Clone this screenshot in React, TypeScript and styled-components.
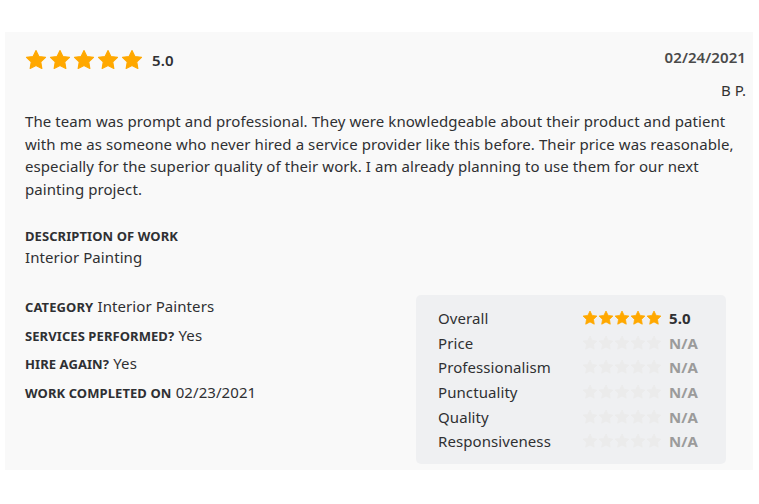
import React from 'react'
import styled, { createGlobalStyle } from 'styled-components'

type Rating = {
  label: string
  value: number | null
}

const ratings: Rating[] = [
  { label: 'Overall', value: 5 },
  { label: 'Price', value: null },
  { label: 'Professionalism', value: null },
  { label: 'Punctuality', value: null },
  { label: 'Quality', value: null },
  { label: 'Responsiveness', value: null },
]

const details = [
  { label: 'CATEGORY', value: 'Interior Painters' },
  { label: 'SERVICES PERFORMED?', value: 'Yes' },
  { label: 'HIRE AGAIN?', value: 'Yes' },
  { label: 'WORK COMPLETED ON', value: '02/23/2021' },
]

const STAR_POINTS = '12,1.6 15.2,8.1 22.4,9.1 17.2,14.1 18.4,21.3 12,17.9 5.6,21.3 6.8,14.1 1.6,9.1 8.8,8.1'

const Star: React.FC<{ size: number; filled: boolean }> = ({ size, filled }) => (
  <svg width={size} height={size} viewBox="0 0 24 24">
    <polygon
      points={STAR_POINTS}
      fill={filled ? '#ffa800' : '#ebebeb'}
      stroke={filled ? '#ffa800' : '#ebebeb'}
      strokeWidth="1.2"
      strokeLinejoin="round"
    />
  </svg>
)

const Stars: React.FC<{ count: number; size: number; gap: number }> = ({ count, size, gap }) => (
  <StarRow $gap={gap}>
    {[0, 1, 2, 3, 4].map((i) => (
      <Star key={i} size={size} filled={i < count} />
    ))}
  </StarRow>
)

const App: React.FC = () => {
  return (
    <>
      <GlobalStyle />
      <Card>
        <Header>
          <HeaderRating>
            <Stars count={5} size={22} gap={2} />
            <Score>5.0</Score>
          </HeaderRating>
          <DateText>02/24/2021</DateText>
        </Header>
        <Author>B P.</Author>
        <Body>
          The team was prompt and professional. They were knowledgeable about their product and patient
          with me as someone who never hired a service provider like this before. Their price was
          reasonable, especially for the superior quality of their work. I am already planning to use
          them for our next painting project.
        </Body>
        <Section>
          <Label>DESCRIPTION OF WORK</Label>
          <Value>Interior Painting</Value>
        </Section>
        <Bottom>
          <Details>
            {details.map((d) => (
              <DetailRow key={d.label}>
                <Label>{d.label}</Label> <Value>{d.value}</Value>
              </DetailRow>
            ))}
          </Details>
          <RatingBox>
            {ratings.map((r) => (
              <RatingRow key={r.label}>
                <RatingLabel>{r.label}</RatingLabel>
                <Stars count={r.value ?? 0} size={16} gap={0} />
                <RatingValue $empty={r.value === null}>
                  {r.value === null ? 'N/A' : r.value.toFixed(1)}
                </RatingValue>
              </RatingRow>
            ))}
          </RatingBox>
        </Bottom>
      </Card>
    </>
  )
}

const GlobalStyle = createGlobalStyle`
  body {
    margin: 0;
    background: #ffffff;
    font-family: 'Noto Sans', 'Open Sans', sans-serif;
    color: #2f3033;
    letter-spacing: 0.08px;
  }
`

const Card = styled.div`
  box-sizing: border-box;
  width: 748px;
  margin: 32px 0 0 5px;
  padding: 17px 7px 6px 20px;
  background: #f9f9f9;
`

const Header = styled.div`
  display: flex;
  justify-content: space-between;
  align-items: center;
`

const HeaderRating = styled.div`
  display: flex;
  align-items: center;
  gap: 9px;
`

const StarRow = styled.div<{ $gap: number }>`
  display: flex;
  gap: ${(p) => p.$gap}px;
`

const Score = styled.span`
  font-size: 15px;
  font-weight: 600;
`

const DateText = styled.span`
  font-size: 15px;
  font-weight: 600;
  color: #4a4a4a;
  margin-top: -6px;
`

const Author = styled.div`
  text-align: right;
  font-size: 15px;
  margin-top: 9px;
  color: #333333;
`

const Body = styled.p`
  margin: 10px 0 0;
  font-size: 15px;
  line-height: 22.5px;
`

const Section = styled.div`
  margin-top: 27px;
  display: flex;
  flex-direction: column;
  gap: 2px;
`

const Label = styled.span`
  font-size: 13px;
  font-weight: 700;
`

const Value = styled.span`
  font-size: 15px;
`

const Bottom = styled.div`
  display: flex;
  justify-content: space-between;
  align-items: flex-start;
  margin-top: 28px;
  padding-right: 20px;
`

const Details = styled.div`
  display: flex;
  flex-direction: column;
  gap: 7px;
  margin-top: 1px;
`

const DetailRow = styled.div`
  line-height: 20.5px;
`

const RatingBox = styled.div`
  box-sizing: border-box;
  width: 310px;
  padding: 11px 22px 10px;
  background: #eff0f2;
  border-radius: 5px;
  display: flex;
  flex-direction: column;
`

const RatingRow = styled.div`
  display: flex;
  align-items: center;
  height: 24.6px;
`

const RatingLabel = styled.span`
  width: 144px;
  font-size: 15px;
`

const RatingValue = styled.span<{ $empty: boolean }>`
  margin-left: 7px;
  font-size: 15px;
  font-weight: 700;
  color: ${(p) => (p.$empty ? '#9b9b9b' : '#2f3033')};
`

export default App
